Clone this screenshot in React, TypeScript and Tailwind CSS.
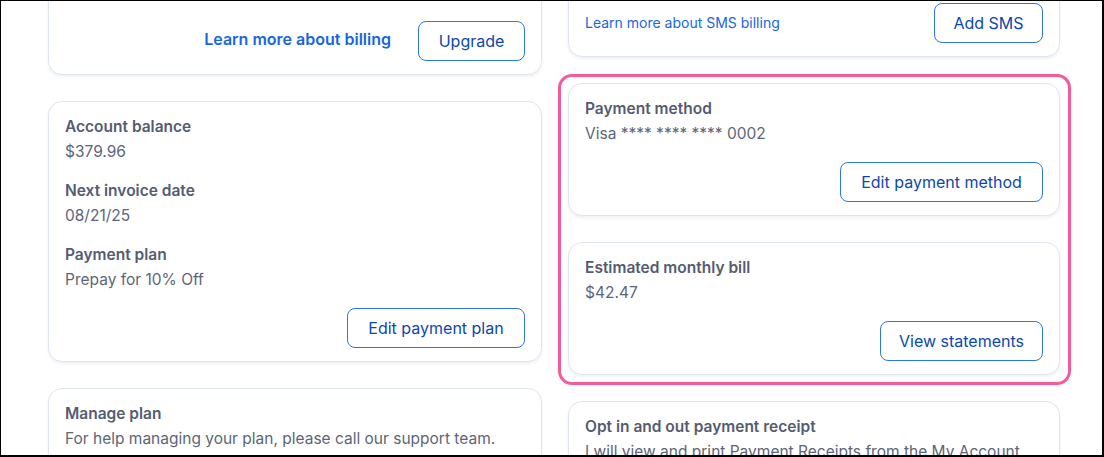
import React from 'react';

const font = { fontFamily: 'Inter, Lato, sans-serif' };

const Card: React.FC<{ className?: string; children: React.ReactNode }> = ({ className = '', children }) => (
  <div
    className={`bg-white border border-[#dfe5f0] rounded-[14px] shadow-[0_2px_3px_rgba(30,50,110,0.07)] px-4 pt-[14px] pb-[13px] ${className}`}
  >
    {children}
  </div>
);

const OutlineButton: React.FC<{ label: string; width: string }> = ({ label, width }) => (
  <button
    className={`h-10 ${width} rounded-lg border border-[#2d74e6] bg-white text-[16px] font-normal text-[#0c47ae] hover:bg-blue-50`}
  >
    {label}
  </button>
);

const Field: React.FC<{ label: string; value: string; last?: boolean }> = ({ label, value, last }) => (
  <div className={last ? '' : 'mb-4'}>
    <p className="text-[15.5px] leading-[22px] font-semibold text-[#535c71]">{label}</p>
    <p className="mt-[2px] text-[15.5px] leading-[24px] text-[#5d6578]">{value}</p>
  </div>
);

const App: React.FC = () => {
  return (
    <div
      style={font}
      className="h-[457px] w-[1104px] overflow-hidden bg-white border-l border-t border-r-2 border-b-2 border-black"
    >
      <div className="grid grid-cols-[494px_492px] gap-x-[26px] pl-[47px]">
        {/* left column */}
        <div className="flex flex-col gap-[26px] -mt-[42px]">
          <Card className="h-[116px] flex items-end justify-end gap-[27px]">
            <a href="#" className="mb-[10px] text-[16px] font-semibold text-[#1766e0]">
              Learn more about billing
            </a>
            <OutlineButton label="Upgrade" width="w-[107px]" />
          </Card>

          <Card>
            <Field label="Account balance" value="$379.96" />
            <Field label="Next invoice date" value="08/21/25" />
            <Field label="Payment plan" value="Prepay for 10% Off" last />
            <div className="mt-4 flex justify-end">
              <OutlineButton label="Edit payment plan" width="w-[178px]" />
            </div>
          </Card>

          <Card className="h-[120px]">
            <Field label="Manage plan" value="For help managing your plan, please call our support team." last />
          </Card>
        </div>

        {/* right column */}
        <div className="flex flex-col gap-[26px] -mt-[42px]">
          <Card className="h-[98px] flex items-end justify-between">
            <a href="#" className="mb-[10px] text-[14px] text-[#1766e0]">
              Learn more about SMS billing
            </a>
            <OutlineButton label="Add SMS" width="w-[109px]" />
          </Card>

          <div className="relative flex flex-col gap-[26px]">
            <div className="pointer-events-none absolute -top-[9px] -left-[10px] -right-[11px] -bottom-[10px] rounded-[14px] border-[3px] border-[#f45b9b]" />
            <Card>
              <Field label="Payment method" value="Visa **** **** **** 0002" last />
              <div className="mt-4 flex justify-end">
                <OutlineButton label="Edit payment method" width="w-[203px]" />
              </div>
            </Card>
            <Card>
              <Field label="Estimated monthly bill" value="$42.47" last />
              <div className="mt-4 flex justify-end">
                <OutlineButton label="View statements" width="w-[163px]" />
              </div>
            </Card>
          </div>

          <Card className="h-[120px]">
            <Field
              label="Opt in and out payment receipt"
              value="I will view and print Payment Receipts from the My Account page"
              last
            />
          </Card>
        </div>
      </div>
    </div>
  );
};

export default App;
